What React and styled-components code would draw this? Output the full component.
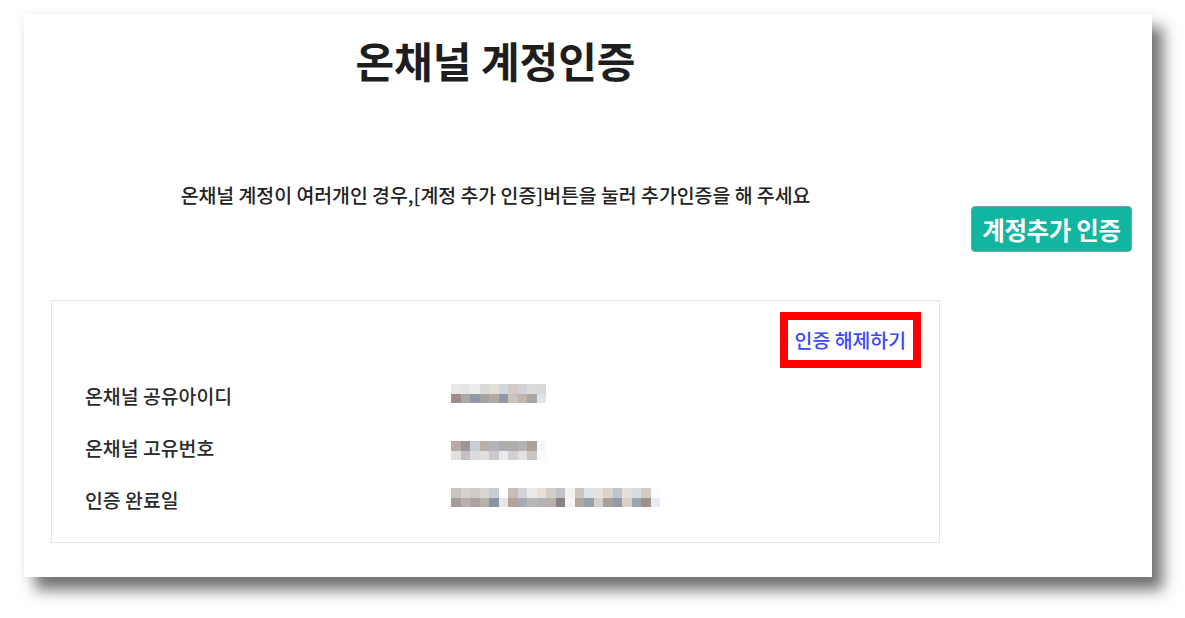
import React from "react";
import styled, { createGlobalStyle } from "styled-components";

const Global = createGlobalStyle`
  html, body { margin: 0; padding: 0; background: #ffffff; }
  body { font-family: "Noto Sans CJK KR", "Noto Sans", sans-serif; color: #222; }
`;

const Page = styled.div`
  padding: 14px 0 0 24px;
  width: 1185px;
  height: 618px;
  box-sizing: border-box;
  overflow: hidden;
`;

const Card = styled.div`
  width: 1128px;
  height: 563px;
  background: #fff;
  box-sizing: border-box;
  padding: 0 20px 0 27px;
  display: flex;
  box-shadow: 0 0 10px rgba(0, 0, 0, 0.05), 11px 13px 14px rgba(0, 0, 0, 0.55);
`;

const Main = styled.div`
  width: 889px;
  display: flex;
  flex-direction: column;
  align-items: center;
`;

const Title = styled.h1`
  margin: 21px 0 0;
  font-size: 42px;
  line-height: 50px;
  font-weight: 700;
  color: #1e1e1e;
  letter-spacing: 0;
`;

const Notice = styled.p`
  margin: 98px 0 0;
  font-size: 19.4px;
  line-height: 24px;
  font-weight: 500;
  color: #222;
`;

const InfoBox = styled.div`
  margin-top: 93px;
  width: 100%;
  box-sizing: border-box;
  border: 1px solid #e6e6e6;
  padding: 11px 18px 16px 33px;
  display: flex;
  flex-direction: column;
`;

const LinkFrame = styled.div`
  align-self: flex-end;
  border: 8px solid #ff0000;
  padding: 8px 7px;
`;

const ReleaseLink = styled.a`
  display: block;
  font-size: 19.4px;
  line-height: 24px;
  color: #3b48ff;
  text-decoration: none;
  font-weight: 500;
`;

const Rows = styled.div`
  margin-top: 2px;
  display: flex;
  flex-direction: column;
`;

const Row = styled.div`
  height: 52px;
  display: flex;
  align-items: center;
`;

const Label = styled.div`
  width: 366px;
  font-size: 19.4px;
  line-height: 24px;
  font-weight: 500;
  color: #2a2a2a;
`;

const Mosaic = styled.div`
  display: grid;
  grid-template-columns: repeat(${(p) => p.$cols}, 9.5px);
  grid-auto-rows: 9.5px;
  margin-top: ${(p) => p.$shift}px;
  filter: blur(0.5px);
`;

const Cell = styled.div`
  background: ${(p) => p.$c};
`;

const Side = styled.div`
  flex: 1;
  display: flex;
  justify-content: flex-end;
  align-items: flex-start;
  padding-top: 192px;
`;

const AddButton = styled.button`
  width: 161px;
  height: 46px;
  background: #12b5a0;
  border: 1px solid #8a9aa8;
  border-radius: 4px;
  color: #fff;
  font-family: "Noto Sans CJK KR", "Noto Sans", sans-serif;
  font-size: 24.5px;
  font-weight: 700;
  letter-spacing: -0.3px;
  padding: 0;
  cursor: pointer;
`;

const mosaics = [
  {
    shift: -5,
    rows: [
      ["#e8e8e8", "#e6e6e6", "#ededed", "#d9d9d9", "#e2ded9", "#d2d6de", "#d5cbc5", "#cfd1d6", "#dcdcdc", "#d8d8d8"],
      ["#9a8d8a", "#adaaa5", "#9199a6", "#a3a3a3", "#b4aaa2", "#8f97a6", "#c7c5c3", "#c0b6ae", "#a9a6a6", "#dfe3ea"],
    ],
  },
  {
    shift: 5,
    rows: [
      ["#b6aba5", "#9d9898", "#c8cdd1", "#b7b0a8", "#b5b4bc", "#b1acaf", "#aeadab", "#b5b3b8", "#ada19c", "#f4f8fc"],
      ["#e3e0dd", "#c5bfc2", "#dcdade", "#e2e0dd", "#cdc8d0", "#ebeaea", "#d2d0d4", "#e3e0df", "#cbc3c0", "#f8fafc"],
    ],
  },
  {
    shift: -5,
    rows: [
      ["#cbc3bf", "#d6d1ce", "#d1cbc8", "#d9d3cf", "#c7cbd3", "#ffffff", "#c6bdb6", "#d2d4d8", "#ecebec", "#e6e0dc", "#d4cdc9", "#c1c2c8", "#f4f2f0", "#cec5c1", "#dde3e8", "#e4e1de", "#d9d4d0", "#c0c4ca", "#e6dfd9", "#d8dce1", "#d4ccc6", "#fbfcfe"],
      ["#a59c9a", "#b7b2ab", "#aca4a2", "#b6b1ad", "#8a93a0", "#e7e7e2", "#b2a49c", "#a8acb4", "#b8b7ba", "#b3b2b4", "#b9b2ac", "#8a8088", "#f5f5f5", "#b3a8a1", "#9aa0a8", "#d5d0cc", "#aaa09a", "#919aa6", "#d9cfc7", "#9da5ad", "#a19288", "#e4ecf7"],
    ],
  },
];

const labels = ["온채널 공유아이디", "온채널 고유번호", "인증 완료일"];

export default function App() {
  return (
    <>
      <Global />
      <Page>
        <Card>
          <Main>
            <Title>온채널 계정인증</Title>
            <Notice>온채널 계정이 여러개인 경우,[계정 추가 인증]버튼을 눌러 추가인증을 해 주세요</Notice>
            <InfoBox>
              <LinkFrame>
                <ReleaseLink href="#">인증 해제하기</ReleaseLink>
              </LinkFrame>
              <Rows>
                {labels.map((l, i) => (
                  <Row key={l}>
                    <Label>{l}</Label>
                    <Mosaic $cols={mosaics[i].rows[0].length} $shift={mosaics[i].shift}>
                      {mosaics[i].rows.flat().map((c, j) => (
                        <Cell key={j} $c={c} />
                      ))}
                    </Mosaic>
                  </Row>
                ))}
              </Rows>
            </InfoBox>
          </Main>
          <Side>
            <AddButton>계정추가 인증</AddButton>
          </Side>
        </Card>
      </Page>
    </>
  );
}
